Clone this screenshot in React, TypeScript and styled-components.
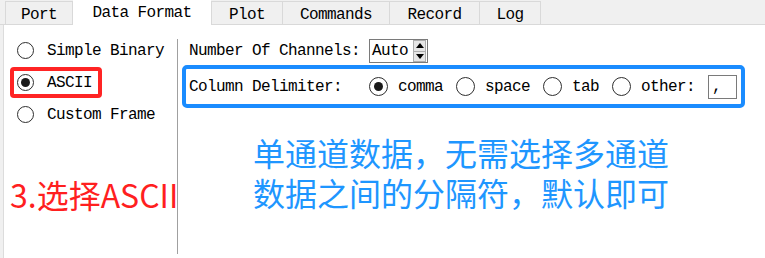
import React from "react";
import styled, { createGlobalStyle } from "styled-components";

const GlobalStyle = createGlobalStyle`
  html, body { margin: 0; padding: 0; background: #ffffff; }
  body { overflow: hidden; }
  * { box-sizing: border-box; }
`;

const ui = `'Liberation Mono', 'DejaVu Sans Mono', monospace`;
const cjk = `'Noto Sans CJK SC', 'Noto Sans', sans-serif`;

const Page = styled.div`
  width: 765px;
  height: 258px;
  display: flex;
  flex-direction: column;
  background: #f0f0f0;
  font-family: ${ui};
  font-size: 16px;
  letter-spacing: -0.6px;
  color: #000;
  overflow: hidden;
`;

const TabBar = styled.div`
  height: 25px;
  flex: none;
  display: flex;
  align-items: flex-end;
  padding-left: 5px;
  border-bottom: 1px solid #d9d9d9;
  background: #f0f0f0;
`;

const Tab = styled.div<{ $w: number; $active?: boolean; $overlap?: boolean }>`
  width: ${(p) => p.$w}px;
  height: ${(p) => (p.$active ? 25 : 23)}px;
  margin-bottom: ${(p) => (p.$active ? -1 : 0)}px;
  margin-left: ${(p) => (p.$overlap ? -1 : 0)}px;
  display: flex;
  align-items: center;
  justify-content: center;
  padding-top: ${(p) => (p.$active ? 1 : 3)}px;
  background: ${(p) => (p.$active ? "#ffffff" : "#f0f0f0")};
  border: ${(p) => (p.$active ? "none" : "1px solid #d9d9d9")};
  border-bottom: none;
  position: relative;
  z-index: ${(p) => (p.$active ? 1 : 0)};
  white-space: nowrap;
`;

const Body = styled.div`
  flex: 1;
  display: flex;
  margin-left: 3px;
  border-left: 1px solid #dcdcdc;
  background: #ffffff;
  min-height: 0;
`;

const LeftCol = styled.div`
  width: 173px;
  flex: none;
  display: flex;
  flex-direction: column;
  align-items: flex-start;
  gap: 1px;
  padding-top: 10px;
`;

const Option = styled.div<{ $hl?: boolean }>`
  margin-left: 6px;
  height: 31px;
  display: flex;
  align-items: center;
  gap: 13px;
  padding: 0 6px 0 3px;
  border: 4px solid ${(p) => (p.$hl ? "#ff2424" : "transparent")};
  border-radius: 4px;
  white-space: nowrap;
`;

const Radio = styled.span<{ $size: number; $checked?: boolean }>`
  width: ${(p) => p.$size}px;
  height: ${(p) => p.$size}px;
  flex: none;
  border-radius: 50%;
  border: 1px solid #2e2e2e;
  background: #ffffff;
  display: flex;
  align-items: center;
  justify-content: center;
  &::after {
    content: "";
    width: 9px;
    height: 9px;
    border-radius: 50%;
    background: #1a1a1a;
    display: ${(p) => (p.$checked ? "block" : "none")};
  }
`;

const RedNote = styled.div`
  margin: 43px 0 0 6px;
  font-family: ${cjk};
  font-size: 32px;
  line-height: 40px;
  letter-spacing: 0;
  color: #ff1f1f;
  white-space: nowrap;
`;

const RightCol = styled.div`
  flex: 1;
  display: flex;
  flex-direction: column;
  align-items: flex-start;
  margin: 14px 0 4px 0;
  padding-left: 4px;
  border-left: 1px solid #a0a0a0;
`;

const ChannelsRow = styled.div`
  height: 24px;
  display: flex;
  align-items: center;
  padding-left: 7px;
  white-space: nowrap;
`;

const SpinBox = styled.div`
  width: 59px;
  height: 24px;
  margin-left: 9px;
  display: flex;
  align-items: center;
  padding-left: 2px;
  border: 1px solid #7a7a7a;
  background: #fff;
`;

const SpinButtons = styled.div`
  margin-left: auto;
  margin-right: 1px;
  width: 13px;
  height: 22px;
  display: flex;
  flex-direction: column;
`;

const SpinBtn = styled.div<{ $down?: boolean }>`
  flex: 1;
  display: flex;
  align-items: center;
  justify-content: center;
  background: #e6e6e6;
  border: 1px solid #adadad;
  border-top: ${(p) => (p.$down ? "none" : "1px solid #adadad")};
  &::after {
    content: "";
    width: 0;
    height: 0;
    border-left: 4px solid transparent;
    border-right: 4px solid transparent;
    ${(p) =>
      p.$down
        ? "border-top: 5px solid #000;"
        : "border-bottom: 5px solid #000;"}
  }
`;

const DelimBox = styled.div`
  margin-top: 2px;
  height: 43px;
  display: flex;
  align-items: center;
  padding: 0 4px 0 3px;
  border: 4px solid #1a8cff;
  border-radius: 5px;
  white-space: nowrap;
`;

const Choice = styled.div<{ $ml: number }>`
  display: flex;
  align-items: center;
  gap: 10px;
  margin-left: ${(p) => p.$ml}px;
`;

const SmallInput = styled.div`
  width: 29px;
  height: 24px;
  margin-left: 13px;
  border: 1px solid #7a7a7a;
  padding: 1px 0 0 3px;
  display: flex;
  align-items: center;
`;

const BlueNote = styled.div`
  margin: 24px 0 0 71px;
  font-family: ${cjk};
  font-size: 32px;
  line-height: 40px;
  letter-spacing: 0;
  color: #1e96ff;
  white-space: nowrap;
`;

const tabs = [
  { label: "Port", w: 68 },
  { label: "Data Format", w: 138, active: true },
  { label: "Plot", w: 72 },
  { label: "Commands", w: 108, overlap: true },
  { label: "Record", w: 91, overlap: true },
  { label: "Log", w: 62, overlap: true },
];

export default function App() {
  return (
    <>
      <GlobalStyle />
      <Page>
        <TabBar>
          {tabs.map((t) => (
            <Tab key={t.label} $w={t.w} $active={t.active} $overlap={t.overlap}>
              {t.label}
            </Tab>
          ))}
        </TabBar>
        <Body>
          <LeftCol>
            <Option>
              <Radio $size={17} />
              Simple Binary
            </Option>
            <Option $hl>
              <Radio $size={17} $checked />
              ASCII
            </Option>
            <Option>
              <Radio $size={17} />
              Custom Frame
            </Option>
            <RedNote>3.选择ASCII</RedNote>
          </LeftCol>
          <RightCol>
            <ChannelsRow>
              Number Of Channels:
              <SpinBox>
                Auto
                <SpinButtons>
                  <SpinBtn />
                  <SpinBtn $down />
                </SpinButtons>
              </SpinBox>
            </ChannelsRow>
            <DelimBox>
              Column Delimiter:
              <Choice $ml={27}>
                <Radio $size={19} $checked />
                comma
              </Choice>
              <Choice $ml={13}>
                <Radio $size={19} />
                space
              </Choice>
              <Choice $ml={13}>
                <Radio $size={19} />
                tab
              </Choice>
              <Choice $ml={13}>
                <Radio $size={19} />
                other:
              </Choice>
              <SmallInput>,</SmallInput>
            </DelimBox>
            <BlueNote>
              单通道数据，无需选择多通道
              <br />
              数据之间的分隔符，默认即可
            </BlueNote>
          </RightCol>
        </Body>
      </Page>
    </>
  );
}
